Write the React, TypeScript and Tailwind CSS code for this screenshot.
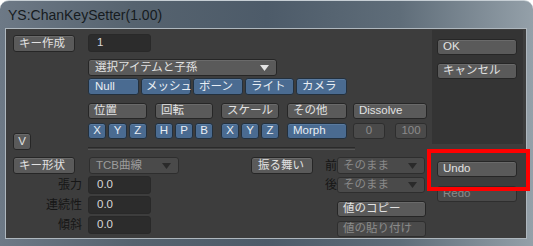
const font = { fontFamily: '"Liberation Sans", "Noto Sans CJK JP", sans-serif' };

const btn =
  'flex items-center whitespace-nowrap rounded-[3px] border border-[#262626] bg-[#5a5a5a] text-[11.5px] leading-none text-[#e2e2e2] shadow-[inset_0_1px_0_#6a6a6a]';
const btnOff =
  'flex items-center whitespace-nowrap rounded-[3px] border border-[#2e2e2e] bg-[#4a4a4a] text-[11.5px] leading-none text-[#8a8a8a]';
const blue =
  'flex items-center whitespace-nowrap rounded-[3px] border border-[#23303d] bg-[#4a6b91] text-[11.5px] leading-none text-[#e8eef4] shadow-[inset_0_1px_0_#5a7ba0]';
const field =
  'flex items-center rounded-[3px] bg-[#2c2c2c] border border-[#292929] text-[11.5px] leading-none text-[#d8d8d8] pl-[8px]';
const label = 'flex items-center justify-end whitespace-nowrap text-[12px] leading-none text-[#161616]';

function Arrow({ color }: { color: string }) {
  return (
    <svg width="9" height="6" viewBox="0 0 9 6" className="ml-auto mr-[7px] shrink-0">
      <path d="M0 0h9L4.5 6z" fill={color} />
    </svg>
  );
}

export default function App() {
  return (
    <div
      className="w-[533px] h-[246px] flex flex-col rounded-t-[9px] border-t border-[#c6ced4] bg-[linear-gradient(90deg,#6d7986_0%,#56636f_25%,#4d5b69_50%,#5f6d79_75%,#94a0a9_100%)] overflow-hidden relative"
      style={font}
    >
      <div className="h-[27px] flex items-center pl-[8px] pt-[2px] text-[14px] text-[#161b20]">
        YS:ChanKeySetter(1.00)
      </div>

      <div className="flex-1 ml-[5px] mr-[6px] mb-[7px] border border-[#aeb7be] bg-[#3d3d3d] flex">
        {/* main area */}
        <div className="w-[421px] pl-[7px] pt-[5px] flex flex-col">
          {/* top section */}
          <div className="flex">
            <div className="w-[62px] flex flex-col">
              <div className={btn + ' h-[17px] mt-[1px] pl-[5px]'}>キー作成</div>
              <div className={btn + ' h-[17px] w-[18px] mt-auto justify-center'}>V</div>
            </div>
            <div className="ml-[13px] flex flex-col">
              <div className={field + ' h-[18px] w-[63px]'}>1</div>

              <div className={btn + ' h-[17px] w-[189px] mt-[7px] pl-[6px]'}>
                選択アイテムと子孫
                <Arrow color="#e4e4e4" />
              </div>

              <div className="flex gap-[2px] mt-[2px] h-[17px]">
                <div className={blue + ' w-[51px] pl-[6px]'}>Null</div>
                <div className={blue + ' w-[50px] pl-[4px]'}>メッシュ</div>
                <div className={blue + ' w-[50px] pl-[5px]'}>ボーン</div>
                <div className={blue + ' w-[49px] pl-[5px]'}>ライト</div>
                <div className={blue + ' w-[51px] pl-[5px]'}>カメラ</div>
              </div>

              <div className="flex mt-[8px] h-[16px]">
                <div className={btn + ' w-[59px] pl-[5px]'}>位置</div>
                <div className={btn + ' w-[58px] ml-[8px] pl-[5px]'}>回転</div>
                <div className={btn + ' w-[58px] ml-[8px] pl-[5px]'}>スケール</div>
                <div className={btn + ' w-[60px] ml-[8px] pl-[5px]'}>その他</div>
                <div className={btn + ' w-[74px] ml-[6px] pl-[5px]'}>Dissolve</div>
              </div>

              <div className="flex mt-[4px] h-[16px]">
                <div className="w-[59px] flex gap-[2px]">
                  <div className={blue + ' flex-1 justify-center'}>X</div>
                  <div className={blue + ' flex-1 justify-center'}>Y</div>
                  <div className={blue + ' flex-1 justify-center'}>Z</div>
                </div>
                <div className="w-[58px] ml-[8px] flex gap-[2px]">
                  <div className={blue + ' flex-1 justify-center'}>H</div>
                  <div className={blue + ' flex-1 justify-center'}>P</div>
                  <div className={blue + ' flex-1 justify-center'}>B</div>
                </div>
                <div className="w-[58px] ml-[8px] flex gap-[2px]">
                  <div className={blue + ' flex-1 justify-center'}>X</div>
                  <div className={blue + ' flex-1 justify-center'}>Y</div>
                  <div className={blue + ' flex-1 justify-center'}>Z</div>
                </div>
                <div className={blue + ' w-[60px] ml-[8px] pl-[5px]'}>Morph</div>
                <div className={btnOff + ' w-[32px] ml-[6px] justify-center'}>0</div>
                <div className={btnOff + ' w-[32px] ml-[10px] justify-center'}>100</div>
              </div>

              <div className="w-[267px] h-[3px] mt-[8px] border-t border-[#2a2a2a] border-b border-b-[#555555]" />
            </div>
          </div>

          {/* bottom section */}
          <div className="flex mt-[7px]">
            <div className="flex flex-col gap-[2px]">
              <div className="flex h-[17px]">
                <div className={btn + ' w-[62px] pl-[5px]'}>キー形状</div>
                <div className={btnOff + ' w-[90px] ml-[14px] pl-[6px] text-[#9c9c9c]'}>
                  TCB曲線
                  <Arrow color="#2a2a2a" />
                </div>
              </div>
              {['張力', '連続性', '傾斜'].map((t) => (
                <div key={t} className="flex h-[18px]">
                  <div className={label + ' w-[69px]'}>{t}</div>
                  <div className={field + ' w-[63px] ml-[6px]'}>0.0</div>
                </div>
              ))}
            </div>

            <div className={btn + ' w-[62px] h-[17px] ml-[72px] pl-[6px]'}>振る舞い</div>

            <div className="flex flex-col">
              <div className="flex h-[17px]">
                <div className={label + ' w-[24px] justify-center'}>前</div>
                <div className={btnOff + ' w-[88px] pl-[5px]'}>
                  そのまま
                  <Arrow color="#2a2a2a" />
                </div>
              </div>
              <div className="flex h-[16px] mt-[3px]">
                <div className={label + ' w-[24px] justify-center'}>後</div>
                <div className={btnOff + ' w-[88px] pl-[5px]'}>
                  そのまま
                  <Arrow color="#2a2a2a" />
                </div>
              </div>
              <div className={btn + ' w-[89px] h-[16px] ml-[24px] mt-[8px] pl-[5px]'}>値のコピー</div>
              <div className={btnOff + ' w-[89px] h-[16px] ml-[24px] mt-[4px] pl-[5px]'}>値の貼り付け</div>
            </div>
          </div>
        </div>

        {/* right column */}
        <div className="w-[91px] ml-[5px] pt-[1px] flex flex-col">
          <div className="h-[114px] bg-[#343434] pt-[9px] pl-[5px] flex flex-col">
            <div className={btn + ' w-[80px] h-[16px] pl-[5px]'}>OK</div>
            <div className={btn + ' w-[80px] h-[16px] mt-[8px] pl-[5px]'}>キャンセル</div>
          </div>
          <div className={btn + ' w-[80px] h-[16px] ml-[5px] mt-[17px] pl-[5px]'}>Undo</div>
          <div className={btnOff + ' w-[80px] h-[16px] ml-[5px] mt-[9px] pl-[5px]'}>Redo</div>
        </div>
      </div>

      {/* annotation */}
      <div className="absolute left-[427px] top-[148px] w-[103px] h-[42px] border-[4px] border-[#ff0000]" />
    </div>
  );
}
